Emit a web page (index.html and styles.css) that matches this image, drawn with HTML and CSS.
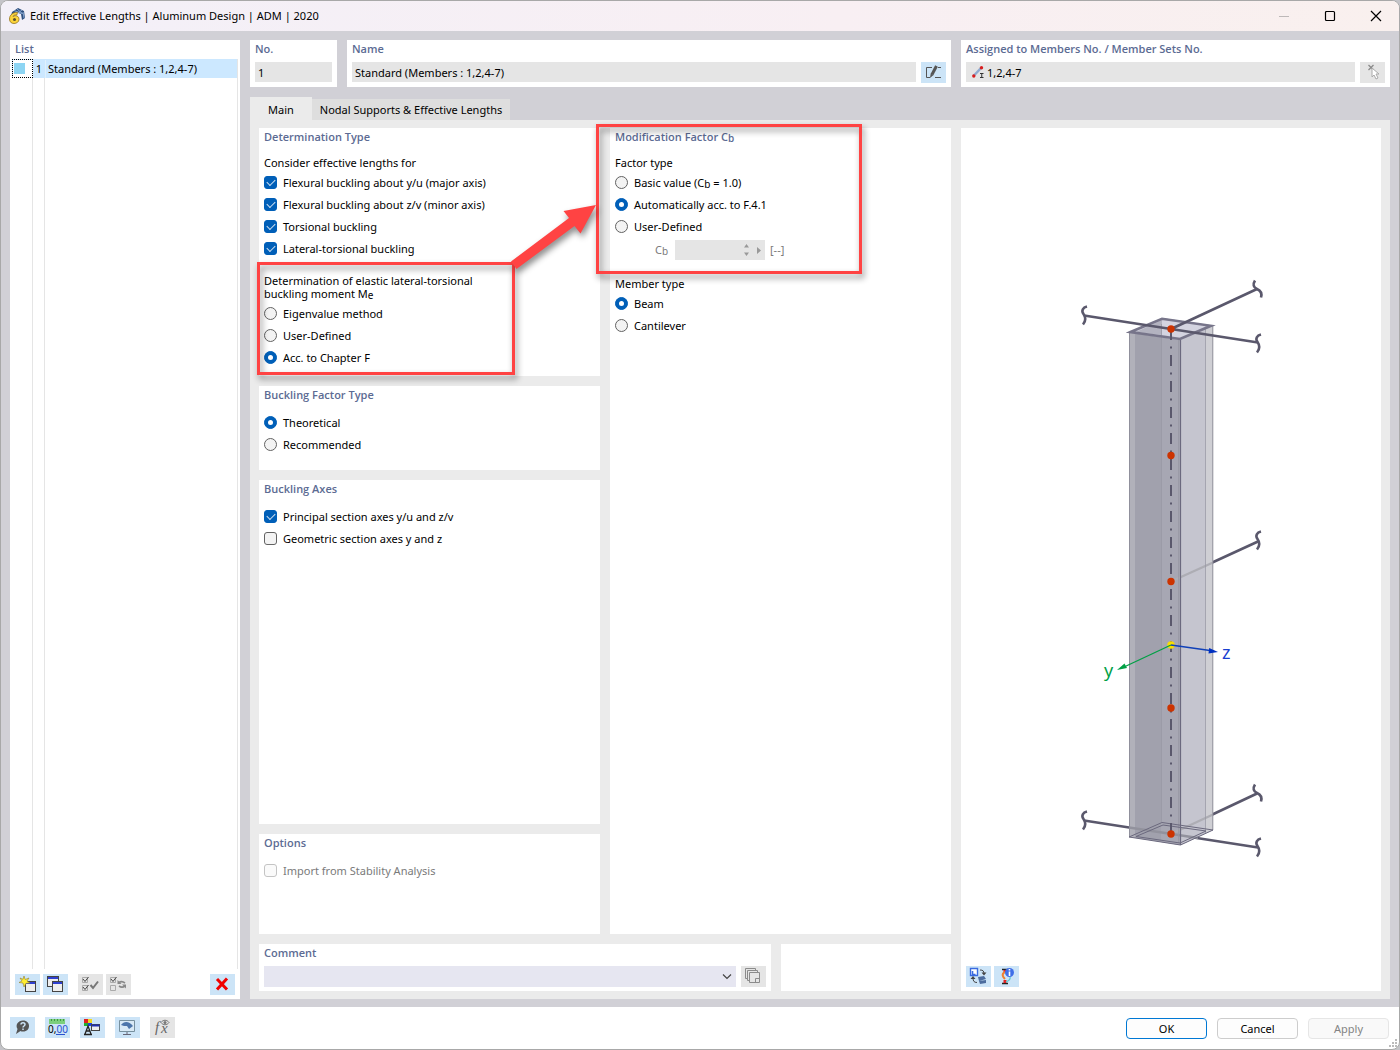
FILE: index.html
```html
<!DOCTYPE html>
<html lang="en">
<head>
<meta charset="utf-8">
<title>Edit Effective Lengths</title>
<link rel="stylesheet" href="styles.css">
</head>
<body>
<div class="window">
  <header class="titlebar">
    <svg class="app-icon" width="17" height="17" viewBox="0 0 17 17">
      <path d="M4 4 10 0 16 3 17 10 14 12 13 6 8 4 3 8z" fill="#2f4f7d"/>
      <path d="M6 2.500l8 3M9 1l6 5M10 5l4-3M15 4l1 6" stroke="#86a5cf" stroke-width="1"/>
      <path d="M9.500 4.500C5 4 1.500 7 1.500 11c0 3 2 4.500 4.500 4.500s5-1.500 5-4.200c0-2.300-1.500-3.600-3.600-3.600-1 0-1.800.3-2.400.8.6-1.300 1.800-1.700 3.800-1.500z" fill="#fbd43c" stroke="#94741a" stroke-width=".8"/>
      <circle cx="6.500" cy="11.500" r="1.500" fill="#5b5230"/>
    </svg>
    <h1 class="title">Edit Effective Lengths | Aluminum Design | ADM | 2020</h1>
    <div class="caption-buttons">
      <button class="caption" aria-label="Minimize" disabled><svg width="12" height="12" viewBox="0 0 12 12"><path d="M1 6.500h10" stroke="#bdb8b8"/></svg></button>
      <button class="caption" aria-label="Maximize"><svg width="12" height="12" viewBox="0 0 12 12"><rect x="1.500" y="1.500" width="9" height="9" rx="1" fill="none" stroke="#000" stroke-width="1.200"/></svg></button>
      <button class="caption" aria-label="Close"><svg width="12" height="12" viewBox="0 0 12 12"><path d="M1 1l10 10M11 1 1 11" stroke="#000" stroke-width="1.200"/></svg></button>
    </div>
  </header>

  <main class="workspace">
    <section class="panel list-panel">
      <h2 class="heading">List</h2>
      <div class="list">
        <table class="list-table">
          <tbody><tr><td class="cell-color"><span class="swatch"></span></td><td class="cell-no">1</td><td class="cell-name">Standard (Members : 1,2,4-7)</td></tr></tbody>
        </table>
      </div>
      <div class="toolbar list-tools">
        <button class="tool" aria-label="New"><svg viewBox="0 0 25 21"><rect x="10.500" y="7.500" width="10" height="10" fill="#eee" stroke="#444"/><path d="M11 8h9v2h-9z" fill="#2e3fd0"/><path d="M9 2l1.200 3.500L14 4l-2 3 3 2-4 .3L9 13l-1-4-4-.5L7 7 5 4l3 1.300z" fill="#ffee30" stroke="#93802b" stroke-width=".6"/></svg></button>
        <button class="tool" aria-label="Copy"><svg viewBox="0 0 25 21"><rect x="4.500" y="2.500" width="11" height="10" fill="#eee" stroke="#444"/><path d="M5 3h10v2H5z" fill="#2e3fd0"/><rect x="9.500" y="7.500" width="10" height="10" fill="#eee" stroke="#444"/><path d="M10 8h9v2h-9z" fill="#2e3fd0"/></svg></button>
        <button class="tool off spaced" aria-label="Select all" disabled><svg viewBox="0 0 25 21" fill="none" stroke="#777"><path d="M4.500 3.500h5v5h-5zM4.500 11.500h5v5h-5z" stroke="#aaa"/><path d="M5 5l2 2.500L10.500 3M5 13l2 2.500L10.500 11" stroke="#444"/><path d="M12.500 11l2.500 3 5-6.500" stroke-width="2"/></svg></button>
        <button class="tool off" aria-label="Invert selection" disabled><svg viewBox="0 0 25 21" fill="none" stroke="#888"><path d="M4.500 3.500h5v5h-5zM4.500 11.500h5v5h-5z" stroke="#aaa"/><path d="M5 5l2 2.500L10.500 3" stroke="#444"/><path d="M13 8.500c2-1.500 4-1 6 .5M19 12c-2 1.500-4 1.500-6 0" stroke-width="1.600"/><path d="M11.500 6v4h4zM20 14.500v-4h-4z" fill="#888" stroke="none"/></svg></button>
        <button class="tool push" aria-label="Delete"><svg viewBox="0 0 25 21"><path d="M7 5l10 10.500M17 4.500 7 15.500" stroke="#f00000" stroke-width="3"/></svg></button>
      </div>
    </section>

    <div class="editor">
      <div class="top-row">
        <section class="panel">
          <label class="heading" for="no">No.</label>
          <div class="field-row"><input id="no" class="field" value="1" readonly></div>
        </section>
        <section class="panel">
          <label class="heading" for="name">Name</label>
          <div class="field-row">
            <input id="name" class="field" value="Standard (Members : 1,2,4-7)" readonly>
            <button class="tool" aria-label="Edit name"><svg viewBox="0 0 25 21" fill="none" stroke="#555"><path d="M11 5.500H5.500v10H9M14 15.500h6M17 5.500h3"/><path d="M15.500 4 11 12.500" stroke-width="3"/><path d="M9.700 11.500l-.7 4.500 3.500-3z" fill="#555" stroke="none"/></svg></button>
          </div>
        </section>
        <section class="panel">
          <label class="heading" for="assigned">Assigned to Members No. / Member Sets No.</label>
          <div class="field-row">
            <div class="field field-icon">
              <svg width="12" height="12" viewBox="0 0 12 12"><path d="M1.500 10 9 2" stroke="#8faad0" stroke-width="2.500"/><circle cx="1.800" cy="10" r="1.700" fill="#d81e1e"/><circle cx="9.500" cy="1.800" r="1.700" fill="#d81e1e"/><path d="M8 7.500h3.500M8 11.500h3.500M9.750 7.500v4" stroke="#333"/></svg>
              <input id="assigned" class="bare" value="1,2,4-7" readonly>
            </div>
            <button class="tool off" aria-label="Select in graphic" disabled><svg viewBox="0 0 25 21"><path d="M8.500 3l5 5M13.500 3l-5 5" stroke="#8a8a8a" stroke-width="1.300"/><path d="M12 6v9l2-2 2 4 2-1-2-4h3z" fill="#fff" stroke="#aaa"/></svg></button>
          </div>
        </section>
      </div>

      <nav class="tabs" role="tablist">
        <button class="tab active" role="tab" aria-selected="true">Main</button>
        <button class="tab" role="tab" aria-selected="false">Nodal Supports &amp; Effective Lengths</button>
      </nav>

      <div class="tab-page">
        <div class="settings">
          <div class="columns">
            <div class="column">
              <section class="panel anchor determination">
                <h2 class="heading gap-below">Determination Type</h2>
                <p class="caption-line">Consider effective lengths for</p>
                <label class="option"><input type="checkbox" checked>Flexural buckling about y/u (major axis)</label>
                <label class="option"><input type="checkbox" checked>Flexural buckling about z/v (minor axis)</label>
                <label class="option"><input type="checkbox" checked>Torsional buckling</label>
                <label class="option"><input type="checkbox" checked>Lateral-torsional buckling</label>
                <p class="question">Determination of elastic lateral-torsional<br>buckling moment M<sub>e</sub></p>
                <label class="option"><input type="radio" name="me">Eigenvalue method</label>
                <label class="option"><input type="radio" name="me">User-Defined</label>
                <label class="option"><input type="radio" name="me" checked>Acc. to Chapter F</label>
                <div class="callout callout-source"></div>
              </section>
              <section class="panel buckling-factor">
                <h2 class="heading gap-below">Buckling Factor Type</h2>
                <label class="option"><input type="radio" name="bf" checked>Theoretical</label>
                <label class="option"><input type="radio" name="bf">Recommended</label>
              </section>
              <section class="panel grow">
                <h2 class="heading gap-below">Buckling Axes</h2>
                <label class="option"><input type="checkbox" checked>Principal section axes y/u and z/v</label>
                <label class="option"><input type="checkbox">Geometric section axes y and z</label>
              </section>
              <section class="panel options">
                <h2 class="heading gap-below">Options</h2>
                <label class="option muted"><input type="checkbox" disabled>Import from Stability Analysis</label>
              </section>
            </div>
            <section class="panel anchor column-panel">
              <h2 class="heading gap-below">Modification Factor C<sub>b</sub></h2>
              <p class="caption-line">Factor type</p>
              <label class="option"><input type="radio" name="ft"><span>Basic value (C<sub>b</sub> = 1.0)</span></label>
              <label class="option"><input type="radio" name="ft" checked>Automatically acc. to F.4.1</label>
              <label class="option"><input type="radio" name="ft">User-Defined</label>
              <div class="cb-row">
                <label for="cb">C<sub>b</sub></label>
                <div class="spinner">
                  <input id="cb" class="bare" disabled>
                  <svg width="22" height="20" viewBox="0 0 22 20" fill="#999"><path d="M1 7.500 3.500 4 6 7.500zM1 12.500 3.500 16 6 12.500zM14 7l4 3.500-4 3.500z"/></svg>
                </div>
                <span class="unit">[--]</span>
              </div>
              <p class="caption-line member-type">Member type</p>
              <label class="option"><input type="radio" name="mt" checked>Beam</label>
              <label class="option"><input type="radio" name="mt">Cantilever</label>
              <div class="callout callout-target"></div>
              <svg class="arrow" width="100" height="80" viewBox="0 0 100 80"><path d="M0 61.500 58 18 52.500 11 85 5 69.500 33.500 63.500 26 5.500 69z" fill="#ff4343"/></svg>
            </section>
          </div>
          <div class="bottom-row">
            <section class="panel comment">
              <label class="heading" for="comment">Comment</label>
              <div class="field-row">
                <div class="select-wrap"><select id="comment" class="select"><option></option></select><svg width="10" height="6" viewBox="0 0 10 6"><path d="M1 .500 5 4.500 9 .500" fill="none" stroke="#444" stroke-width="1.200"/></svg></div>
                <button class="tool off" aria-label="Comment templates" disabled><svg viewBox="0 0 25 21" fill="#e5e5e5" stroke="#8b8b8b"><path d="M4.500 2.500h10v10h-10z"/><path d="M6.500 4.500h10v10h-10z"/><path d="M8.500 6.500h10v10h-10zM14.500 16.500v-4h4"/></svg></button>
              </div>
            </section>
            <section class="panel spare"></section>
          </div>
        </div>

        <section class="panel viewer">
          <svg class="model" viewBox="961 128 420 838" role="img" aria-label="Column with supports">
            <g fill="none" stroke="#5a586c" stroke-width="2.600">
              <path d="M1084 820.500 1171 834 1258 847.500M1171 834 1257 793.500M1171 581.500 1258 541.500"/>
            </g>
            <path d="M1129 332.500 1162 318 1213 325.500V830l-32.500 15-51.500-8z" fill="#a1a1ad"/>
            <path d="M1129 332.500l6 1V838l-6-1z" fill="#b1b1ba"/>
            <path d="M1161 318h1l18 20v507l-19-3z" fill="#a7a7b3"/>
            <path d="M1180 340 1213 325.500V830l-33 15z" fill="#c5c5cf"/>
            <path d="M1206 328.500l7-3V830l-7 3z" fill="#cfcfd4"/>
            <path d="M1129 332.500 1162 318 1213 325.500 1180 340z" fill="#d4d4e0"/>
            <path d="M1136 332 1162 320v15z" fill="#b3b3c0"/>
            <path d="M1171 581.500 1213 562.500M1171 834 1213 814.500" fill="none" stroke="#adadb4" stroke-width="2.300"/>
            <path d="M1129 827.500 1198 838" fill="none" stroke="#92929d" stroke-width="2.300"/>
            <path d="M1205.500 329v504M1161.500 324v498M1178.500 340v503" stroke="#9696a2" stroke-width=".7"/>
            <path d="M1129.500 332.500V837M1212.800 325.500V830" stroke="#90909c"/>
            <path d="M1180.500 340v505" stroke="#6b697e" stroke-width="1.200"/>
            <path d="M1130.500 332 1162 318.800 1211 325.800 1180 339z" fill="none" stroke="#77758a" stroke-width="2.600"/>
            <path d="M1129 837 1162 822.500 1213 830 1180.500 845zM1136 836.500 1163 825 1206 831 1180 843z" fill="none" stroke="#6b697e"/>
            <path d="M1171 329v505" stroke="#5a586c" stroke-width="2" stroke-dasharray="11 6.500 2 6.500"/>
            <g fill="none" stroke="#5a586c" stroke-width="2.600">
              <path d="M1084 315.500 1171 329 1258 342.500M1171 329 1257 289"/>
              <path id="brk" d="M1087 306.500c-4 1-6 4-3.500 7.500s2.500 7-.5 10.500"/>
              <use href="#brk" x="174" y="28"/><use href="#brk" x="174" y="225"/><use href="#brk" y="505"/><use href="#brk" x="174" y="532"/>
              <path id="brk2" d="M1255 280.500c-2.500 4-1.500 7 2 8.500s5.500 3.500 4 8.500"/>
              <use href="#brk2" y="504"/>
            </g>
            <g fill="#cc3300"><circle cx="1171" cy="329" r="3.700"/><circle cx="1171" cy="455.500" r="3.700"/><circle cx="1171" cy="581.500" r="3.700"/><circle cx="1171" cy="708" r="3.700"/><circle cx="1171" cy="834" r="3.700"/></g>
            <circle cx="1171" cy="645" r="3.700" fill="#f8dc00"/>
            <path d="M1171 645 1124 667" stroke="#00a045" stroke-width="1.300"/><path d="M1117 670l7.500-6.500 2.500 4.500z" fill="#00a045"/>
            <path d="M1171 645 1210 650.500" stroke="#1040b8" stroke-width="1.300"/><path d="M1218 652l-9.500 1.500.7-5.500z" fill="#0030c0"/>
            <text x="1104" y="677" class="axis-label" fill="#00a045">y</text>
            <text x="1222" y="659" class="axis-label" fill="#1a3fd0">z</text>
          </svg>
          <div class="toolbar">
            <button class="tool" aria-label="Switch view"><svg viewBox="0 0 25 21"><path d="M4.500 2.500h7v7h-7z" fill="#fff" stroke="#3a6be0" stroke-width="1.400"/><path d="M6.500 5v3.500h3" fill="none" stroke="#3a6be0" stroke-width="1.600"/><path d="M14 4c3 0 4 1 4 4M7 12c0 3 1 4.500 4 4.500" fill="none" stroke="#444"/><path d="M15.500 6.500h5l-2.500 3zM4.500 13h5L7 10z" fill="#444"/><path d="M12 11l6-1 2 3-7 2zM13 15l7-1v3l-6 1z" fill="#4c6c9e"/></svg></button>
            <button class="tool" aria-label="Information"><svg viewBox="0 0 25 21"><path d="M8 3.500h6M8 17.500h6" stroke="#222" stroke-width="1.500"/><path d="M11 4v2.500M11 14v3" stroke="#e02020" stroke-width="3"/><path d="M11 6c-4 2-2 5 0 7" fill="none" stroke="#f08030" stroke-width="2"/><path d="M16 11c1 3-2 4-4 5" fill="none" stroke="#60c8d0" stroke-width="1.300"/><circle cx="15.500" cy="6.500" r="4.500" fill="#3f6fe8"/><path d="M15.500 3v1.500M15.500 5.500V10" stroke="#fff" stroke-width="1.600"/></svg></button>
          </div>
        </section>
      </div>
    </div>
  </main>

  <footer class="footer">
    <button class="tool" aria-label="Help"><svg viewBox="0 0 25 21"><path d="M13 3.500c4 0 6 2.500 6 5.500s-2 5.500-6 5.500c-1 0-2 0-2.500-.5L6 17l1.500-5C5 8 8 3.500 13 3.500z" fill="#555"/><path d="M11 7.500c0-2.500 4-2.500 4 0 0 1.500-2 1.500-2 3M13 11.500V13" fill="none" stroke="#cce4f7" stroke-width="1.500"/></svg></button>
    <button class="tool" aria-label="Units"><svg viewBox="0 0 25 21"><path d="M4 2h16v5H4z" fill="#7ccf7c"/><path d="M6.500 2v2M9.500 2v2M12.500 2v2M15.500 2v2M18.500 2v2" stroke="#3f9a45"/><text x="3" y="16" class="unit-label">0,<tspan fill="#2850d0">00</tspan></text><path d="M11 17.500h9" stroke="#2850d0"/></svg></button>
    <button class="tool" aria-label="Display"><svg viewBox="0 0 25 21"><path d="M4 2h4v4H4z" fill="#e02020"/><path d="M8 2h4v4H8z" fill="#f0d820"/><path d="M4 6h4v3H4z" fill="#20b030"/><path d="M8 6h4v3H8z" fill="#2040e0"/><path d="M5 17l3-8 3 8M6 14h4M4 17.500h8" fill="none" stroke="#222" stroke-width="1.300"/><rect x="11.500" y="7.500" width="8" height="6" fill="#eee" stroke="#444"/><path d="M12 7.500h7.500v2H12z" fill="#2030b0"/></svg></button>
    <button class="tool" aria-label="View settings"><svg viewBox="0 0 25 21"><path d="M4.500 3.500h15v11h-15z" fill="#d8e9f6" stroke="#77909f"/><path d="M12 15v3M8 17.500h8" stroke="#667"/><path d="M6 8c3-4 8-4 12 1l-4 3-2-3-3 0z" fill="#4c75ab"/></svg></button>
    <button class="tool off" aria-label="Formula" disabled><svg viewBox="0 0 25 21"><text x="5" y="15" class="fx">f</text><text x="11" y="16" class="fx">x</text><path d="M11 5.500c2-3 6-3 8 0-2 3-6 3-8 0z" fill="none" stroke="#777"/><circle cx="15" cy="5.500" r="1.500" fill="#777"/></svg></button>
    <div class="actions">
      <button class="action primary">OK</button>
      <button class="action">Cancel</button>
      <button class="action" disabled>Apply</button>
    </div>
    <svg class="grip" width="10" height="10" viewBox="0 0 10 10" fill="#bbb"><path d="M7 0h2v2H7zM4 3h2v2H4zM7 3h2v2H7zM1 6h2v2H1zM4 6h2v2H4zM7 6h2v2H7z"/></svg>
  </footer>
</div>
</body>
</html>
```
FILE: styles.css
```css
* { box-sizing: border-box; }

body {
  margin: 0;
  background: #c4c4c8;
  color: #000;
  font: 11px/18px "Noto Sans", "Open Sans", sans-serif;
}

h1, h2, p { margin: 0; font-size: 11px; font-weight: 400; }
button, input, select { font: inherit; color: inherit; margin: 0; }
svg { display: block; flex: none; }
sub { font-size: 10px; line-height: 0; vertical-align: -1px; }

.window {
  display: flex;
  flex-direction: column;
  min-height: 100vh;
  border: 1px solid #a8a8a8;
  border-radius: 8px;
  background: #fff;
  overflow: hidden;
}

/* Title bar */
.titlebar {
  display: flex;
  align-items: center;
  height: 30px;
  padding-left: 7px;
  background: linear-gradient(90deg, #f3f0f8, #f8eff3 60%, #f9f0ee);
}
.title { margin-left: 5px; }
.caption-buttons { display: flex; margin-left: auto; }
.caption {
  display: grid;
  place-items: center;
  width: 46px;
  height: 30px;
  padding: 0;
  border: 0;
  background: none;
}

/* Frame */
.workspace {
  display: flex;
  flex: 1;
  gap: 10px;
  padding: 9px 9px 8px;
  background: #d1d0d6;
}
.panel { min-width: 0; padding: 0 5px 4px; background: #fff; }
.heading { display: block; color: #5c6b93; font-family: "Open Sans", sans-serif; font-weight: 600; }
.heading.gap-below { margin-bottom: 8px; }
.field-row { display: flex; gap: 5px; margin-top: 4px; }

.tool {
  flex: none;
  width: 25px;
  height: 21px;
  padding: 0;
  border: 0;
  background: #cce4f7;
}
.tool.off { background: #e5e5e5; }
.tool svg { width: 25px; height: 21px; }
.toolbar { display: flex; gap: 3px; }
.spaced { margin-left: 7px; }
.push { margin-left: auto; }

.field {
  flex: 1;
  min-width: 0;
  width: 100%;
  height: 20px;
  padding: 0 3px;
  border: 0;
  background: #e5e5e5;
}
.field-icon { display: flex; align-items: center; gap: 3px; padding: 0 6px; }
.bare { flex: 1; min-width: 0; width: 100%; padding: 1px 0 0; border: 0; background: none; }

/* List */
.list-panel {
  display: flex;
  flex-direction: column;
  width: 230px;
}
.list {
  flex: 1;
  margin: 1px -3px 5px;
  border-right: 1px solid #e5e5e5;
  background:
    linear-gradient(#e5e5e5, #e5e5e5) 20px 0 / 1px 100% no-repeat,
    linear-gradient(#e5e5e5, #e5e5e5) 32px 0 / 1px 100% no-repeat;
}
.list-table { width: 100%; border-collapse: collapse; background: #cce8ff; }
.list-table td { height: 18px; padding: 0; line-height: 18px; }
.list-table .cell-color { width: 20px; padding: 1px; border: 1px dotted #000; background: #fff; }
.swatch { display: block; width: 11px; height: 11px; background: #8dd5f3; }
.cell-no { width: 13px; text-align: center; }
.list-table .cell-name { padding-left: 2px; border-left: 1px solid #dff0fc; }

/* Editor */
.editor { display: flex; flex: 1; flex-direction: column; min-width: 0; }
.top-row { display: grid; grid-template-columns: 87px 1fr 429px; gap: 10px; }

.tabs { display: flex; align-items: flex-end; height: 23px; margin-top: 10px; }
.tab { height: 21px; padding: 0 8px; border: 0; background: #dedede; }
.tab.active { height: 23px; padding: 2px 18px 0; background: #ebebeb; }

.tab-page {
  display: flex;
  flex: 1;
  gap: 10px;
  padding: 8px 9px;
  background: #ebebeb;
}
.settings { display: flex; flex: 1; flex-direction: column; gap: 10px; min-width: 0; }
.columns { display: grid; flex: 1; grid-template-columns: 1fr 1fr; gap: 10px; }
.column { display: flex; flex-direction: column; gap: 10px; min-width: 0; }
.grow { flex: 1; }
.determination { padding-bottom: 7px; }
.buckling-factor { padding-bottom: 14px; }
.options { padding-bottom: 52px; }
.anchor { position: relative; }

.option { display: flex; align-items: center; height: 22px; }
.question { margin: 14px 0 3px; line-height: 13px; }
.muted { color: #7a7a7a; }

input[type="checkbox"], input[type="radio"] {
  display: grid;
  place-items: center;
  flex: none;
  width: 13px;
  height: 13px;
  margin: 0 6px 1px 0;
  border: 1px solid #626262;
  border-radius: 3px;
  background: #f3f3f3;
  appearance: none;
}
input[type="radio"] { border-radius: 50%; }
input:checked { border-color: #005fb8; background: #005fb8; }
input[type="radio"]:checked::after { content: ""; width: 5px; height: 5px; border-radius: 50%; background: #fff; }
input[type="checkbox"]:checked::after {
  content: "";
  width: 7px;
  height: 4px;
  margin-bottom: 2px;
  border: solid #cfe2f3;
  border-width: 0 0 1px 1px;
  transform: rotate(-45deg);
}
input[type="checkbox"]:disabled { border-color: #c4c4c4; background: #fafafa; }

.cb-row { display: flex; align-items: center; height: 24px; padding-left: 40px; color: #7a7a7a; }
.cb-row label { width: 20px; }
.unit { margin-left: 5px; }
.spinner { display: flex; width: 90px; height: 20px; background: #e5e5e5; }
.member-type { margin-top: 13px; }

/* Annotations over the form */
.callout {
  position: absolute;
  z-index: 2;
  border: 3px solid #ff4343;
  filter: drop-shadow(2px 4px 3px rgba(0, 0, 0, .45));
  pointer-events: none;
}
.callout-source { top: 134px; left: -2px; width: 258px; height: 113px; }
.callout-target { top: -4px; left: -14px; width: 266px; height: 150px; }
.arrow {
  position: absolute;
  z-index: 3;
  top: 72px;
  left: -99px;
  filter: drop-shadow(2px 4px 3px rgba(0, 0, 0, .45));
  pointer-events: none;
}

.bottom-row { display: grid; grid-template-columns: 1fr 170px; gap: 10px; }
.select-wrap { display: grid; flex: 1; align-items: center; }
.select-wrap > * { grid-area: 1 / 1; }
.select-wrap svg { justify-self: end; margin-right: 4px; pointer-events: none; }
.select { width: 100%; height: 21px; border: 0; background: #e6e6f1; appearance: none; }

/* Viewer */
.viewer { display: flex; flex-direction: column; width: 420px; padding: 0 0 4px; }
.viewer .toolbar { padding-left: 5px; }
.model { flex: 1; width: 100%; min-height: 0; }
.axis-label { font-size: 18px; }

/* Footer */
.footer { display: flex; align-items: flex-start; gap: 10px; height: 42px; padding: 10px 10px 0 9px; position: relative; }
.actions { display: flex; gap: 10px; margin-left: auto; }
.action {
  width: 81px;
  height: 21px;
  margin-top: 1px;
  padding: 0;
  border: 1px solid #cdcdcd;
  border-radius: 4px;
  background: #fdfdfd;
}
.action.primary { border-color: #0078d4; }
.action:disabled { border-color: #e6e6e6; background: #f9f9f9; color: #838383; }
.grip { position: absolute; right: 1px; bottom: 0; }
.unit-label { font-size: 10px; }
.fx { font: italic 15px "Liberation Serif", serif; fill: #666; }
```
